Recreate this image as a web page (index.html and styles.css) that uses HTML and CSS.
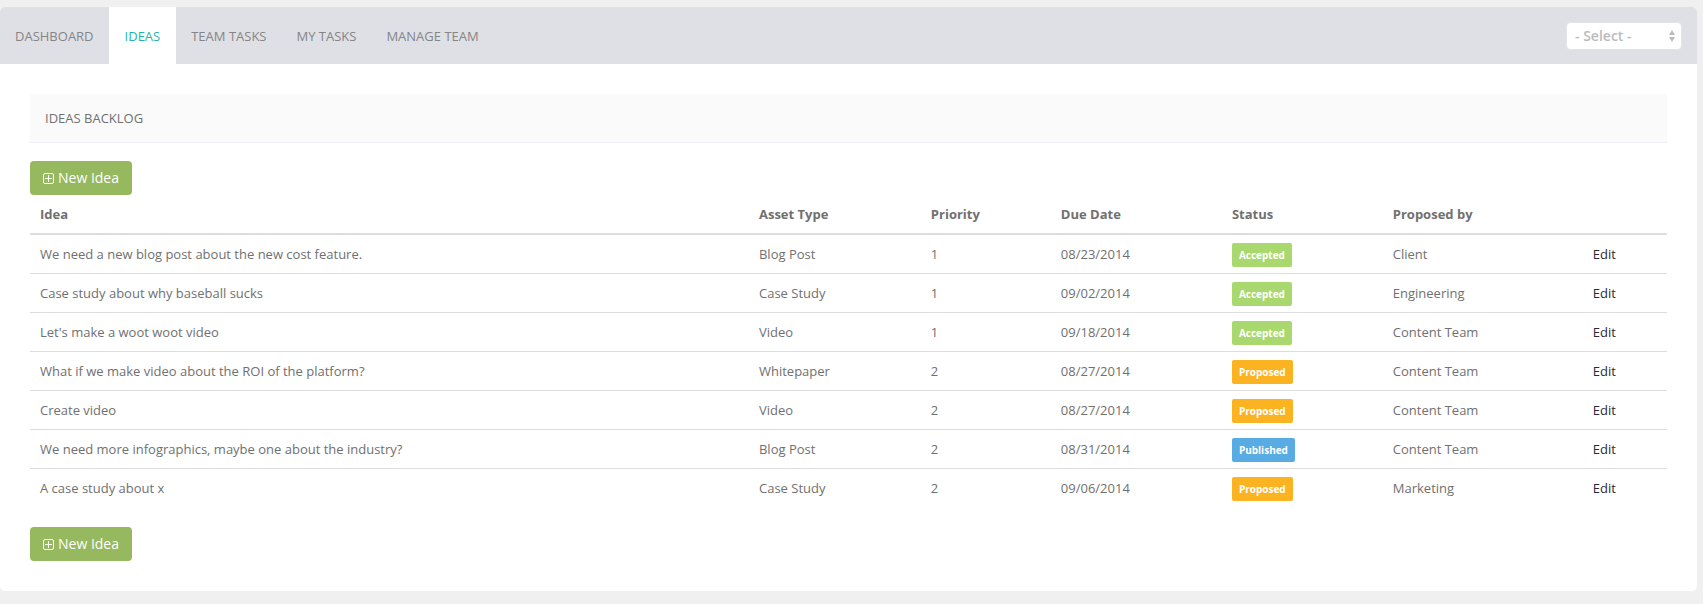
FILE: index.html
```
<!DOCTYPE html>
<html lang="en">
<head>
<meta charset="utf-8">
<title>Ideas Backlog</title>
<link rel="stylesheet" href="styles.css">
</head>
<body>
<div class="card">
  <header class="topbar">
    <nav class="tabs">
      <a class="tab" href="#dashboard">DASHBOARD</a>
      <a class="tab tab-active" href="#ideas" aria-current="page">IDEAS</a>
      <a class="tab" href="#team-tasks">TEAM TASKS</a>
      <a class="tab" href="#my-tasks">MY TASKS</a>
      <a class="tab" href="#manage-team">MANAGE TEAM</a>
    </nav>
    <div class="picker">
      <select class="picker-select" aria-label="Select">
        <option>- Select -</option>
      </select>
      <svg class="picker-arrows" viewBox="0 0 6 12" aria-hidden="true"><path d="M3 0L6 5H0zM0 7H6L3 12z"/></svg>
    </div>
  </header>
  <main class="content">
    <h1 class="panel-title">IDEAS BACKLOG</h1>
    <button class="btn" type="button">
      <svg class="btn-icon" viewBox="0 0 11 11" aria-hidden="true"><rect x=".5" y=".5" width="10" height="10" rx="1.5"/><path d="M5.500 2v7M2 5.500h7"/></svg>
      New Idea
    </button>
    <table class="ideas">
      <colgroup>
        <col class="col-idea"><col class="col-type"><col class="col-priority"><col class="col-due"><col class="col-status"><col class="col-by"><col>
      </colgroup>
      <thead>
        <tr><th>Idea</th><th>Asset Type</th><th>Priority</th><th>Due Date</th><th>Status</th><th>Proposed by</th><td></td></tr>
      </thead>
      <tbody>
        <tr><td>We need a new blog post about the new cost feature.</td><td>Blog Post</td><td>1</td><td>08/23/2014</td><td><span class="badge accepted">Accepted</span></td><td>Client</td><td><a class="edit" href="#edit">Edit</a></td></tr>
        <tr><td>Case study about why baseball sucks</td><td>Case Study</td><td>1</td><td>09/02/2014</td><td><span class="badge accepted">Accepted</span></td><td>Engineering</td><td><a class="edit" href="#edit">Edit</a></td></tr>
        <tr><td>Let's make a woot woot video</td><td>Video</td><td>1</td><td>09/18/2014</td><td><span class="badge accepted">Accepted</span></td><td>Content Team</td><td><a class="edit" href="#edit">Edit</a></td></tr>
        <tr><td>What if we make video about the ROI of the platform?</td><td>Whitepaper</td><td>2</td><td>08/27/2014</td><td><span class="badge proposed">Proposed</span></td><td>Content Team</td><td><a class="edit" href="#edit">Edit</a></td></tr>
        <tr><td>Create video</td><td>Video</td><td>2</td><td>08/27/2014</td><td><span class="badge proposed">Proposed</span></td><td>Content Team</td><td><a class="edit" href="#edit">Edit</a></td></tr>
        <tr><td>We need more infographics, maybe one about the industry?</td><td>Blog Post</td><td>2</td><td>08/31/2014</td><td><span class="badge published">Published</span></td><td>Content Team</td><td><a class="edit" href="#edit">Edit</a></td></tr>
        <tr><td>A case study about x</td><td>Case Study</td><td>2</td><td>09/06/2014</td><td><span class="badge proposed">Proposed</span></td><td>Marketing</td><td><a class="edit" href="#edit">Edit</a></td></tr>
      </tbody>
    </table>
    <button class="btn" type="button">
      <svg class="btn-icon" viewBox="0 0 11 11" aria-hidden="true"><rect x=".5" y=".5" width="10" height="10" rx="1.5"/><path d="M5.500 2v7M2 5.500h7"/></svg>
      New Idea
    </button>
  </main>
</div>
</body>
</html>
```
FILE: styles.css
```
* {
  box-sizing: border-box;
}

body {
  margin: 0;
  padding: 7px 6px 13px 0;
  background: #f0f0f0;
  color: #707070;
  font: 13px/18px "Open Sans", "Noto Sans", sans-serif;
}

.card {
  background: #fff;
  border-radius: 5px;
  overflow: hidden;
}

.topbar {
  display: flex;
  justify-content: space-between;
  align-items: center;
  padding-right: 15px;
  background: #dfe0e6;
}

.tabs {
  display: flex;
}

.tab {
  padding: 20px 15px 19px;
  color: #858585;
  text-decoration: none;
}

.tab-active {
  padding-right: 16px;
  padding-left: 16px;
  background: #fff;
  color: #1fb5ac;
}

.picker {
  display: grid;
  align-items: center;
}

.picker-select,
.picker-arrows {
  grid-area: 1 / 1;
}

.picker-select {
  appearance: none;
  width: 116px;
  height: 28px;
  padding: 0 20px 0 8px;
  border: 1px solid #e4e5e9;
  border-radius: 4px;
  background: #fff;
  color: #bbb;
  font: 600 14px/18px "Open Sans", "Noto Sans", sans-serif;
}

.picker-arrows {
  justify-self: end;
  width: 6px;
  height: 12px;
  margin-right: 7px;
  fill: #bbb;
  pointer-events: none;
}

.content {
  padding: 30px;
}

.panel-title {
  margin: 0 0 18px;
  padding: 15px;
  border-bottom: 1px solid #eff0f7;
  border-radius: 3px 3px 0 0;
  background: #fafafa;
  color: #707070;
  font-size: 13px;
  font-weight: 400;
  line-height: 18px;
}

.btn {
  display: flex;
  align-items: center;
  gap: 4px;
  height: 34px;
  padding: 0 13px;
  border: 0;
  border-radius: 4px;
  background: #96b85e;
  color: #fff;
  font: 500 14px/20px "Open Sans", "Noto Sans", sans-serif;
}

.btn-icon {
  width: 11px;
  height: 11px;
  fill: none;
  stroke: #fff;
}

.ideas {
  width: 100%;
  margin-bottom: 20px;
  border-spacing: 0;
  table-layout: fixed;
}

.col-idea { width: 43.92%; }
.col-type { width: 10.5%; }
.col-priority { width: 7.94%; }
.col-due { width: 10.45%; }
.col-status { width: 9.83%; }
.col-by { width: 12.22%; }

.ideas th,
.ideas td {
  height: 39px;
  padding: 0 10px;
  border-bottom: 1px solid #ddd;
  text-align: left;
  vertical-align: middle;
}

.ideas thead th,
.ideas thead td {
  height: 40px;
  border-bottom-width: 2px;
}

.ideas tbody tr:last-child td {
  height: 38px;
  border-bottom: 0;
}

.badge {
  display: block;
  width: fit-content;
  margin-top: 2px;
  padding: 3px 7px;
  border-radius: 2px;
  color: #fff;
  font-size: 10px;
  font-weight: 700;
  line-height: 18px;
}

.accepted { background: #a9d86e; }
.proposed { background: #fcb322; }
.published { background: #58ace3; }

.edit {
  color: #2a2a35;
  text-decoration: none;
}
```
